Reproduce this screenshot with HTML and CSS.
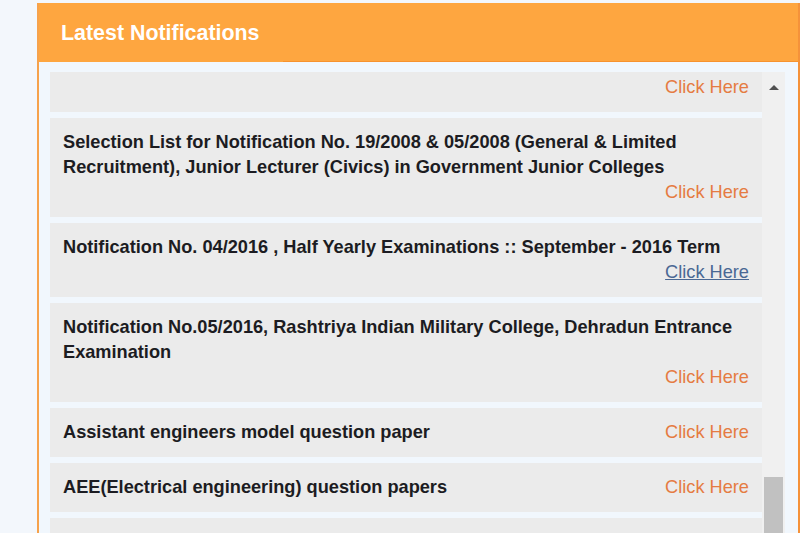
FILE: index.html
```html
<!DOCTYPE html>
<html>
<head>
<meta charset="utf-8">
<link rel="stylesheet" href="styles.css">
</head>
<body>
<div class="panel">
  <div class="panel-head">
    <div class="panel-title">Latest Notifications</div>
  </div>
  <div class="panel-body">
    <div class="list">
      <div class="item item-cut">
        <a class="link" href="#">Click Here</a>
      </div>
      <div class="item">
        <span class="title">Selection List for Notification No. 19/2008 &amp; 05/2008 (General &amp; Limited Recruitment), Junior Lecturer (Civics) in Government Junior Colleges</span>
        <a class="link" href="#">Click Here</a>
      </div>
      <div class="item">
        <span class="title">Notification No. 04/2016 , Half Yearly Examinations :: September - 2016 Term</span>
        <a class="link link-hover" href="#">Click Here</a>
      </div>
      <div class="item">
        <span class="title">Notification No.05/2016, Rashtriya Indian Military College, Dehradun Entrance Examination</span>
        <a class="link" href="#">Click Here</a>
      </div>
      <div class="item">
        <span class="title">Assistant engineers model question paper</span>
        <a class="link" href="#">Click Here</a>
      </div>
      <div class="item">
        <span class="title">AEE(Electrical engineering) question papers</span>
        <a class="link" href="#">Click Here</a>
      </div>
      <div class="item item-last"></div>
    </div>
    <div class="scrollbar">
      <div class="scroll-up"><span class="arrow"></span></div>
      <div class="thumb"></div>
    </div>
  </div>
</div>
</body>
</html>
```
FILE: styles.css
```css
html, body {
  margin: 0;
  padding: 0;
  height: 533px;
  overflow: hidden;
}
body {
  background: #f3f7fc;
  font-family: "Liberation Sans", Arial, sans-serif;
}
.panel {
  margin: 3px 0 0 37px;
  width: 763px;
  height: 530px;
  box-sizing: border-box;
  border-left: 2px solid #f6a24c;
  border-right: 2px solid #f5923a;
  background: #f1f7fd;
  display: flex;
  flex-direction: column;
}
.panel-head {
  height: 58px;
  background: #fea640;
  border-bottom: 1px solid #f7932f;
  display: flex;
  align-items: stretch;
  flex-shrink: 0;
}
.panel-title {
  width: 222px;
  padding: 2px 0 0 22px;
  color: #ffffff;
  font-weight: bold;
  font-size: 21.4px;
  line-height: 56px;
  background: #fea640;
  margin-bottom: -1px;
}
.panel-body {
  flex: 1;
  display: flex;
  padding: 10px 12px 0 11px;
  overflow: hidden;
}
.list {
  width: 712px;
  display: flex;
  flex-direction: column;
  gap: 6px;
}
.item {
  background: #ebebeb;
  padding: 12px 13px 12px 13px;
  display: flex;
  flex-wrap: wrap;
  align-items: baseline;
  font-size: 18.2px;
  line-height: 25px;
  flex-shrink: 0;
}
.item-cut {
  padding-top: 3px;
}
.item-last {
  height: 49px;
  box-sizing: border-box;
}
.title {
  color: #1c1c22;
  font-weight: bold;
  flex: 0 1 auto;
}
.link {
  margin-left: auto;
  color: #e57b42;
  text-decoration: none;
  white-space: nowrap;
}
.link-hover {
  color: #4a6894;
  text-decoration: underline;
}
.scrollbar {
  width: 23px;
  background: #f0f0f0;
  display: flex;
  flex-direction: column;
  align-items: center;
  overflow: hidden;
}
.scroll-up {
  height: 30px;
  width: 100%;
  display: flex;
  align-items: center;
  justify-content: center;
  flex-shrink: 0;
}
.arrow {
  width: 0;
  height: 0;
  border-left: 5px solid transparent;
  border-right: 5px solid transparent;
  border-bottom: 5px solid #505050;
}
.thumb {
  margin-top: 375px;
  width: 19px;
  height: 120px;
  background: #c1c1c1;
  flex-shrink: 0;
}
```
